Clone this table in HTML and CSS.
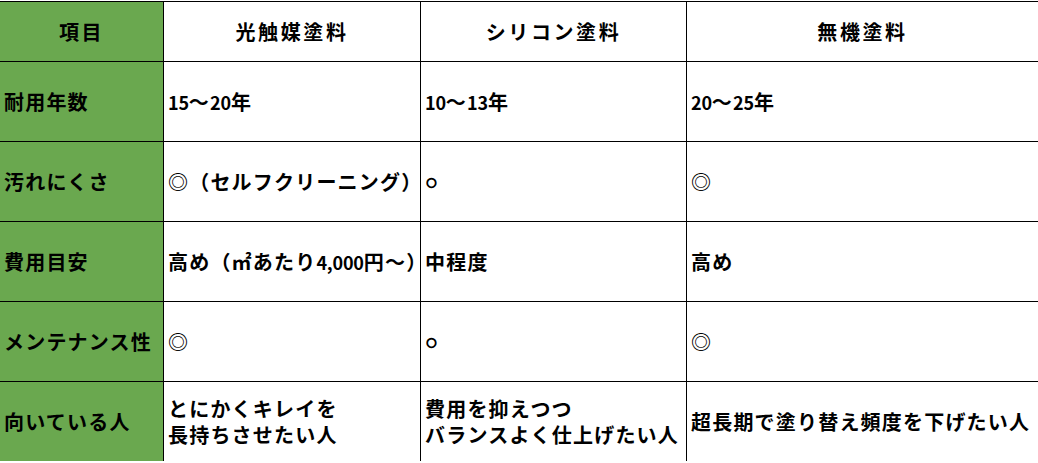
FILE: index.html
```html
<!DOCTYPE html>
<html lang="ja">
<head>
<meta charset="utf-8">
<title>塗料比較表</title>
<link rel="stylesheet" href="styles.css">
</head>
<body>
<div class="table" role="table">
  <div class="cell head label">項目</div>
  <div class="cell head">光触媒塗料</div>
  <div class="cell head">シリコン塗料</div>
  <div class="cell head">無機塗料</div>

  <div class="cell label">耐用年数</div>
  <div class="cell"><span class="num">15</span>〜<span class="num">20</span>年</div>
  <div class="cell"><span class="num">10</span>〜<span class="num">13</span>年</div>
  <div class="cell"><span class="num">20</span>〜<span class="num">25</span>年</div>

  <div class="cell label">汚れにくさ</div>
  <div class="cell">◎（セルフクリーニング）</div>
  <div class="cell"><span class="maru">○</span></div>
  <div class="cell">◎</div>

  <div class="cell label">費用目安</div>
  <div class="cell">高め（㎡あたり<span class="num">4,000</span>円〜）</div>
  <div class="cell">中程度</div>
  <div class="cell">高め</div>

  <div class="cell label">メンテナンス性</div>
  <div class="cell">◎</div>
  <div class="cell"><span class="maru">○</span></div>
  <div class="cell">◎</div>

  <div class="cell label">向いている人</div>
  <div class="cell"><div class="lines"><span class="line">とにかくキレイを</span><span class="line">長持ちさせたい人</span></div></div>
  <div class="cell"><div class="lines"><span class="line">費用を抑えつつ</span><span class="line">バランスよく仕上げたい人</span></div></div>
  <div class="cell">超長期で塗り替え頻度を下げたい人</div>
</div>
</body>
</html>
```

FILE: styles.css
```css
html, body {
  margin: 0;
  padding: 0;
  background: #ffffff;
  overflow: hidden;
}

body {
  padding-top: 1px;
  font-family: "Noto Sans CJK JP", "Noto Sans", sans-serif;
  font-weight: 700;
  color: #000000;
}

.table {
  width: 1038px;
  display: grid;
  grid-template-columns: 163px 256px 265px 1fr;
  grid-template-rows: 59px repeat(5, 79px);
  gap: 1px;
  padding-top: 1px;
  background: #000000;
}

.cell {
  background: #ffffff;
  display: flex;
  align-items: center;
  padding-left: 4px;
  font-size: 20px;
  letter-spacing: 1.2px;
  line-height: 26px;
  white-space: nowrap;
}

.lines {
  display: flex;
  flex-direction: column;
}

.line {
  display: block;
  height: 26px;
}

.label {
  background: #6aa84f;
  padding-left: 4px;
}

.head {
  justify-content: center;
  padding-left: 0;
  font-size: 20px;
  letter-spacing: 2.6px;
}

.num {
  font-size: 18px;
  letter-spacing: -0.2px;
}

.maru {
  font-family: "DejaVu Sans", sans-serif;
  font-size: 12px;
  -webkit-text-stroke: 1px #000000;
  letter-spacing: 0;
  padding-left: 1px;
}
```
